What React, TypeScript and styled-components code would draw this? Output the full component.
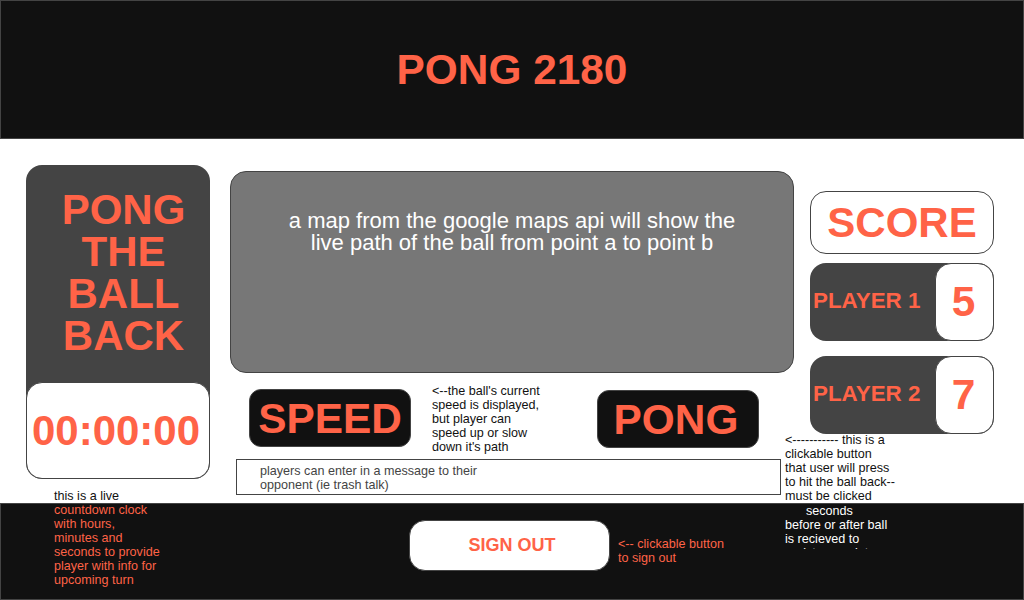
import styled, { createGlobalStyle } from 'styled-components';

const tomato = '#ff6347';
const dark = '#111111';
const grey = '#444444';

const GlobalStyle = createGlobalStyle`
  html, body {
    margin: 0;
    padding: 0;
    background: #fff;
    text-rendering: optimizeSpeed;
  }
  * {
    box-sizing: border-box;
  }
`;

const Page = styled.div`
  width: 1024px;
  height: 600px;
  overflow: hidden;
  display: flex;
  flex-direction: column;
  font-family: "Liberation Sans", Arial, sans-serif;
`;

const Header = styled.header`
  height: 139px;
  flex: none;
  background: ${dark};
  border: 1px solid ${grey};
  display: flex;
  justify-content: center;
  align-items: center;
`;

const Title = styled.h1`
  margin: 0;
  font-size: 42.4px;
  font-weight: 700;
  color: ${tomato};
`;

const Main = styled.main`
  height: 364px;
  flex: none;
  display: grid;
  grid-template-columns: 184px 564px 184px;
  padding-left: 26px;
`;

const LeftColumn = styled.section`
  padding-top: 26px;
  width: 184px;
`;

const TurnPanel = styled.div`
  height: 314px;
  background: ${grey};
  border-radius: 16px;
  display: flex;
  flex-direction: column;
  justify-content: space-between;
`;

const TurnTitle = styled.h2`
  margin: 0;
  padding: 24px 0 0 11px;
  font-size: 42px;
  line-height: 42px;
  font-weight: 700;
  text-align: center;
  color: ${tomato};
`;

const Clock = styled.div`
  height: 97px;
  padding-right: 4px;
  background: #fff;
  border: 1px solid ${grey};
  border-radius: 16px;
  display: flex;
  justify-content: center;
  align-items: center;
  font-size: 42px;
  font-weight: 700;
  color: ${tomato};
`;

const Note = styled.div<{ $color?: string }>`
  font-size: 12.6px;
  line-height: 14px;
  white-space: nowrap;
  color: ${props => props.$color || dark};
`;

const ClockNote = styled(Note)`
  margin: 10px 0 0 28px;
`;

const CenterColumn = styled.section`
  margin-left: 20px;
  padding-top: 32px;
  width: 564px;
`;

const MapBox = styled.div`
  height: 202px;
  background: #777777;
  border: 1px solid ${grey};
  border-radius: 16px;
  padding-top: 38px;
  text-align: center;
  font-size: 22px;
  line-height: 22px;
  color: #fff;
`;

const Controls = styled.div`
  height: 86px;
  display: grid;
  grid-template-columns: 162px 144px 162px;
  column-gap: 21px;
  padding-left: 19px;
`;

const GameButton = styled.button<{ $top: number; $inset?: number }>`
  width: 162px;
  height: 58px;
  margin-top: ${props => props.$top}px;
  padding: 2px ${props => props.$inset || 0}px 0 0;
  border: 1px solid ${grey};
  border-radius: 12px;
  background: ${dark};
  color: ${tomato};
  font-family: inherit;
  font-size: 42.4px;
  font-weight: 700;
`;

const SpeedNote = styled(Note)`
  margin-top: 11px;
`;

const MessageBox = styled.div`
  width: 545px;
  height: 36px;
  margin-left: 6px;
  padding: 4px 0 0 23px;
  border: 1px solid ${grey};
  font-size: 12.6px;
  line-height: 14px;
  color: ${grey};
`;

const RightColumn = styled.section`
  margin-left: 36px;
  padding-top: 52px;
  width: 184px;
`;

const ScoreTitle = styled.div`
  height: 63px;
  border: 1px solid ${grey};
  border-radius: 16px;
  display: flex;
  justify-content: center;
  align-items: center;
  font-size: 42px;
  font-weight: 700;
  color: ${tomato};
`;

const PlayerRow = styled.div<{ $top: number }>`
  height: 78px;
  margin-top: ${props => props.$top}px;
  background: ${grey};
  border-radius: 16px;
  display: flex;
  justify-content: space-between;
  align-items: center;
  padding-left: 3px;
`;

const PlayerName = styled.span`
  padding-bottom: 2px;
  font-size: 22.4px;
  font-weight: 700;
  color: ${tomato};
`;

const PlayerScore = styled.span`
  width: 59px;
  height: 100%;
  padding-right: 2px;
  background: #fff;
  border: 1px solid ${grey};
  border-radius: 16px;
  display: flex;
  justify-content: center;
  align-items: center;
  font-size: 42.4px;
  font-weight: 700;
  color: ${tomato};
`;

const PongNote = styled(Note)`
  margin-left: -25px;
  margin-top: -1px;
`;

const Footer = styled.footer`
  height: 97px;
  flex: none;
  background: ${dark};
  border: 1px solid ${grey};
  display: grid;
  grid-template-columns: 355px 209px 167px 112px;
  padding-left: 53px;
  align-items: start;
`;

const SignOut = styled.button`
  width: 201px;
  height: 51px;
  margin-top: 16px;
  padding: 0 0 0 5px;
  border: 1px solid ${grey};
  border-radius: 16px;
  background: #fff;
  color: ${tomato};
  font-family: inherit;
  font-size: 18px;
  font-weight: 700;
`;

const TurnNote = styled(Note)`
  margin-top: -1px;
`;

const SignOutNote = styled(Note)`
  margin-top: 33px;
`;

const ClippedNote = styled(Note)`
  height: 45px;
  overflow: hidden;
`;

export default function App() {
  return (
    <Page>
      <GlobalStyle />
      <Header>
        <Title>PONG 2180</Title>
      </Header>
      <Main>
        <LeftColumn>
          <TurnPanel>
            <TurnTitle>PONG<br />THE<br />BALL<br />BACK</TurnTitle>
            <Clock>00:00:00</Clock>
          </TurnPanel>
          <ClockNote>this is a live</ClockNote>
        </LeftColumn>
        <CenterColumn>
          <MapBox>
            a map from the google maps api will show the<br />
            live path of the ball from point a to point b
          </MapBox>
          <Controls>
            <GameButton $top={16}>SPEED</GameButton>
            <SpeedNote>
              &lt;--the ball's current<br />
              speed is displayed,<br />
              but player can<br />
              speed up or slow<br />
              down it's path
            </SpeedNote>
            <GameButton $top={17} $inset={4}>PONG</GameButton>
          </Controls>
          <MessageBox>
            players can enter in a message to their<br />
            opponent (ie trash talk)
          </MessageBox>
        </CenterColumn>
        <RightColumn>
          <ScoreTitle>SCORE</ScoreTitle>
          <PlayerRow $top={9}>
            <PlayerName>PLAYER 1</PlayerName>
            <PlayerScore>5</PlayerScore>
          </PlayerRow>
          <PlayerRow $top={15}>
            <PlayerName>PLAYER 2</PlayerName>
            <PlayerScore>7</PlayerScore>
          </PlayerRow>
          <PongNote>
            &lt;----------- this is a<br />
            clickable button<br />
            that user will press<br />
            to hit the ball back--<br />
            must be clicked
          </PongNote>
        </RightColumn>
      </Main>
      <Footer>
        <TurnNote $color={tomato}>
          countdown clock<br />
          with hours,<br />
          minutes and<br />
          seconds to provide<br />
          player with info for<br />
          upcoming turn
        </TurnNote>
        <SignOut>SIGN OUT</SignOut>
        <SignOutNote $color={tomato}>
          &lt;-- clickable button<br />
          to sign out
        </SignOutNote>
        <ClippedNote $color="#fff">
          &nbsp;&nbsp;&nbsp;&nbsp;&nbsp;&nbsp;seconds<br />
          before or after ball<br />
          is recieved to<br />
          register a point
        </ClippedNote>
      </Footer>
    </Page>
  );
}
